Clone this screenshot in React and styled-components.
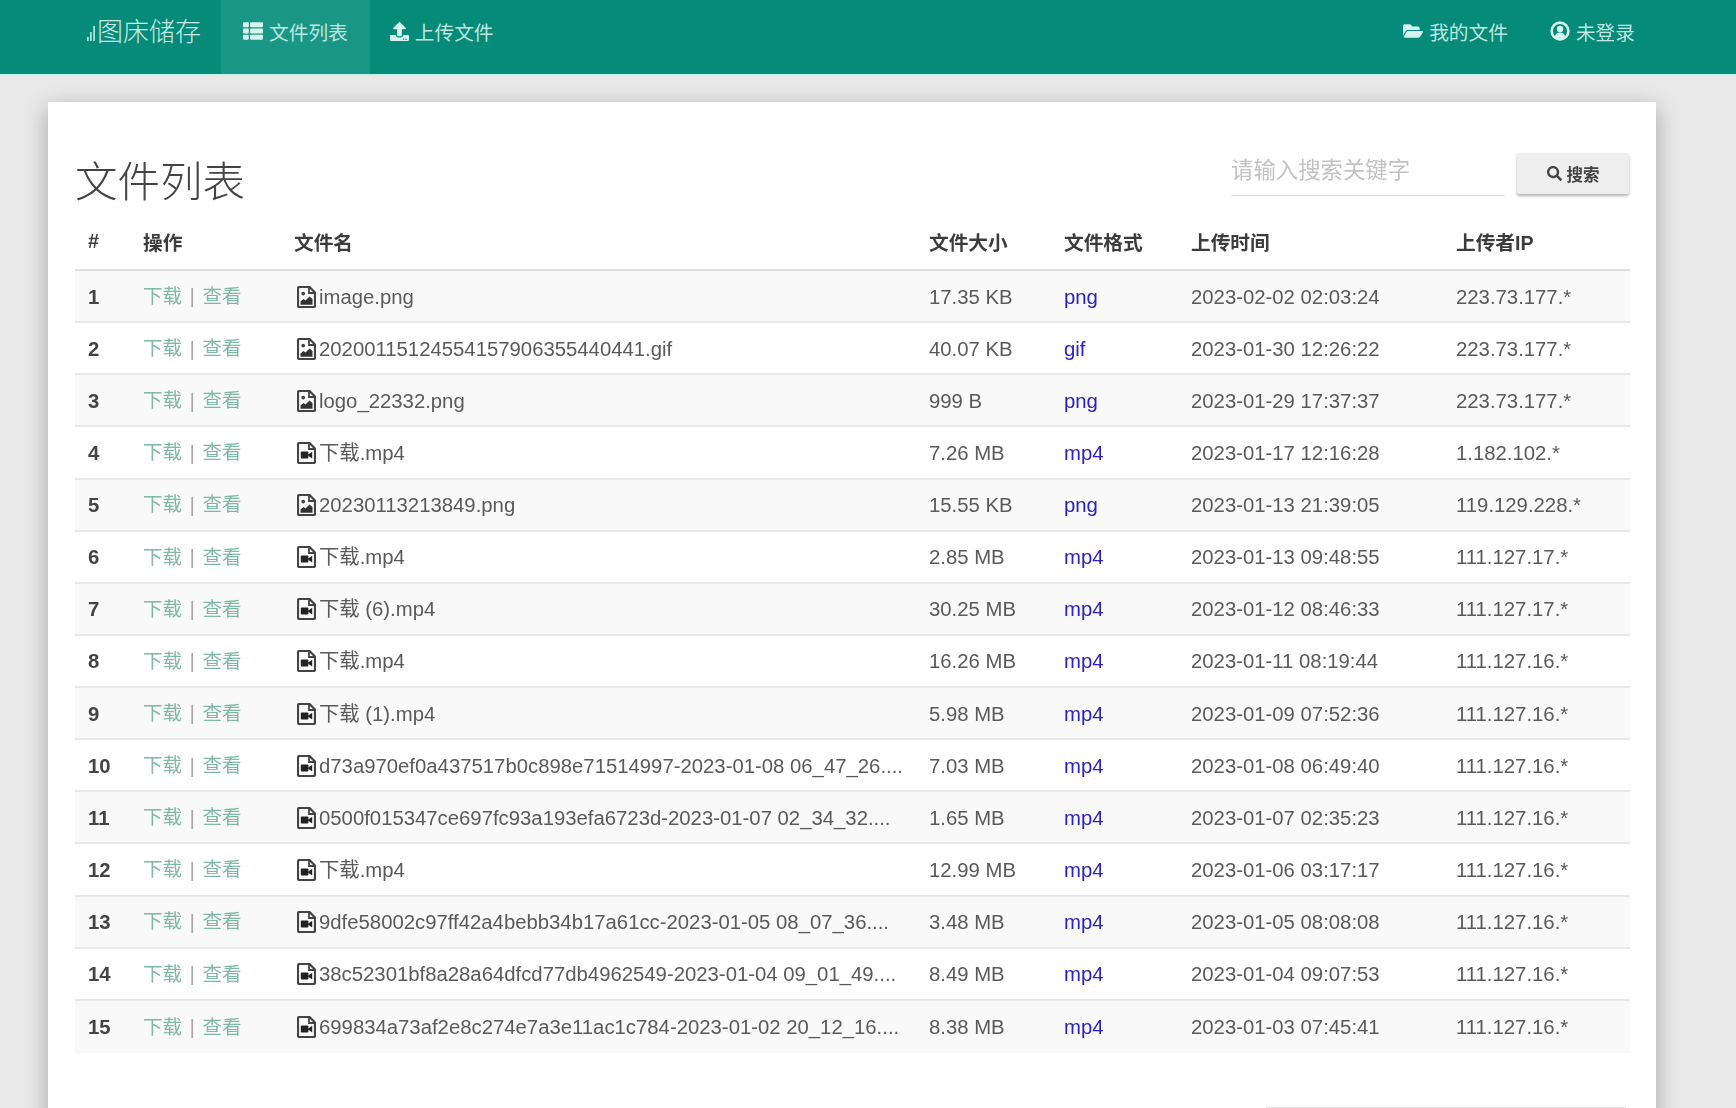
import React from "react";
import styled, { createGlobalStyle } from "styled-components";
import { FaThList, FaUpload, FaFolderOpen, FaSearch } from "react-icons/fa";

const FONT = `"Liberation Sans", "Noto Sans CJK SC", Arial, sans-serif`;

const Global = createGlobalStyle`
  html, body { margin: 0; height: 1108px; overflow: hidden; background: #e9e9e9; }
  * { box-sizing: border-box; }
  body { font-family: ${FONT}; color: #555; }
`;

const Page = styled.div`
  display: flex;
  flex-direction: column;
  height: 1108px;
  overflow: hidden;
  filter: blur(0.7px);
`;

const NavBar = styled.nav`
  flex: none;
  display: flex;
  justify-content: space-between;
  height: 76px;
  padding: 0 81px 0 87px;
  background: #068a7a;
  border-bottom: 2px solid #c2f2ea;
`;

const NavGroup = styled.div`
  display: flex;
  align-items: stretch;
`;

const Brand = styled.a`
  display: flex;
  align-items: center;
  gap: 2px;
  padding: 0 20px 16px 0;
  font-size: 26px;
  font-weight: 300;
  color: #c6ebe5;
`;

const BrandMark = styled.svg`
  width: 8px;
  height: 16px;
  margin-top: 8px;
`;

const NavItem = styled.a`
  display: flex;
  align-items: center;
  gap: ${(p) => p.$gap || 6}px;
  padding: 0 ${(p) => p.$padEnd || p.$pad || 21}px 12px ${(p) => p.$pad || 21}px;
  font-size: 19.7px;
  color: #bfe6df;
  background: ${(p) => (p.$active ? "#1a9686" : "transparent")};
  svg { flex: none; color: #d6f3ee; }
`;

const Card = styled.main`
  flex: 1;
  margin: 26px 80px 0 48px;
  padding: 50px 25px 0 27px;
  background: #fff;
  box-shadow: 0 6px 22px rgba(0, 0, 0, 0.3);
`;

const CardHead = styled.header`
  display: flex;
  justify-content: space-between;
  align-items: flex-start;
  height: 65px;
`;

const Title = styled.h1`
  margin: 0;
  padding-top: 3px;
  font-size: 42.5px;
  line-height: 56px;
  font-weight: 300;
  color: #444;
`;

const SearchForm = styled.form`
  display: flex;
  align-items: flex-start;
  gap: 12px;
  margin: 1px 2px 0 0;
`;

const SearchInput = styled.input`
  width: 274px;
  height: 43px;
  padding: 0 0 7px;
  border: 0;
  border-bottom: 1.5px solid #dcdcdc;
  outline: none;
  background: transparent;
  font-family: ${FONT};
  font-size: 22.4px;
  &::placeholder { color: #c2c2c2; opacity: 1; }
`;

const SearchButton = styled.button`
  display: flex;
  align-items: center;
  justify-content: center;
  gap: 5px;
  width: 112px;
  height: 41px;
  border: 0;
  border-radius: 2px;
  background: #eeeeee;
  box-shadow: 0 2px 3px rgba(0, 0, 0, 0.3);
  font-family: ${FONT};
  font-size: 16.5px;
  font-weight: 700;
  color: #444;
`;

const Table = styled.table`
  width: 1555px;
  table-layout: fixed;
  border-collapse: separate;
  border-spacing: 0;
  font-size: 20.32px;
`;

const HeadCell = styled.th`
  height: 54px;
  padding: 0 13px 4px 13px;
  text-align: left;
  font-size: 19.7px;
  font-weight: 700;
  color: #3c3c3c;
  border-bottom: 2px solid #dddddd;
`;

const Row = styled.tr`
  background: ${(p) => (p.$odd ? "#f9f9f9" : "#fff")};
`;

const Cell = styled.td`
  height: 52.13px;
  padding: 1px 13px 0;
  line-height: 24px;
  white-space: nowrap;
  overflow: hidden;
  color: #5a5a5a;
  border-bottom: ${(p) => (p.$last ? "0" : "2px solid #e9e9e9")};
`;

const IndexCell = styled(Cell)`
  font-weight: 700;
  color: #444;
`;

const Actions = styled.span`
  display: inline-flex;
  align-items: center;
  gap: 7.5px;
  margin-bottom: 2px;
  vertical-align: middle;
  font-size: 19.5px;
`;

const ActionLink = styled.a`
  color: #7db9a6;
`;

const Divider = styled.span`
  color: #a8a8a8;
  font-size: 21px;
  line-height: 1;
`;

const FileName = styled.span`
  display: flex;
  align-items: center;
  gap: 3px;
  margin-left: 3px;
`;

const FileLabel = styled.span`
  line-height: 24px;
  height: 24px;
`;

const FileGlyph = styled.svg`
  flex: none;
  width: 19px;
  height: 22px;
`;

const UserGlyph = styled.svg`
  width: 20px;
  height: 20px;
`;

const FormatLink = styled.a`
  color: #2a22c9;
`;

const Pager = styled.div`
  width: 360px;
  height: 40px;
  margin: 54px 5px 0 auto;
  border-top: 2px solid #e4e4e4;
`;

const ImageIcon = () => (
  <FileGlyph viewBox="0 0 19 22" aria-hidden="true">
    <path d="M2.5 1h10L18 6.5V19.5a1.5 1.5 0 0 1-1.5 1.5h-14A1.5 1.5 0 0 1 1 19.5v-17A1.5 1.5 0 0 1 2.5 1z" fill="none" stroke="#444" strokeWidth="2.2" />
    <path d="M12 1v6h6" fill="none" stroke="#444" strokeWidth="1.8" />
    <circle cx="6.2" cy="7.6" r="1.9" fill="#444" />
    <path d="M3.5 18.8v-3.3l3-2.5 2 1.6 4-4.1 3 2.6v5.7z" fill="#333" />
  </FileGlyph>
);

const VideoIcon = () => (
  <FileGlyph viewBox="0 0 19 22" aria-hidden="true">
    <path d="M2.5 1h10L18 6.5V19.5a1.5 1.5 0 0 1-1.5 1.5h-14A1.5 1.5 0 0 1 1 19.5v-17A1.5 1.5 0 0 1 2.5 1z" fill="none" stroke="#444" strokeWidth="2.2" />
    <path d="M12 1v6h6" fill="none" stroke="#444" strokeWidth="1.8" />
    <rect x="3.8" y="9.6" width="7.6" height="7" rx="1" fill="#222" />
    <path d="M11 12.8 15.2 9.8v6.6L11 13.4z" fill="#222" />
  </FileGlyph>
);

const UserIcon = () => (
  <UserGlyph viewBox="0 0 20 20" aria-hidden="true">
    <circle cx="10" cy="10" r="8.4" fill="none" stroke="currentColor" strokeWidth="2.6" />
    <circle cx="10" cy="8" r="3.2" fill="currentColor" />
    <path d="M4.8 15.4c1-2.8 3-3.8 5.2-3.8s4.200 1 5.200 3.800c-1.400 1.200-3.200 2-5.200 2s-3.800-.8-5.200-2z" fill="currentColor" />
  </UserGlyph>
);

const rows = [
  ["image.png", "17.35 KB", "png", "2023-02-02 02:03:24", "223.73.177.*"],
  ["20200115124554157906355440441.gif", "40.07 KB", "gif", "2023-01-30 12:26:22", "223.73.177.*"],
  ["logo_22332.png", "999 B", "png", "2023-01-29 17:37:37", "223.73.177.*"],
  ["下载.mp4", "7.26 MB", "mp4", "2023-01-17 12:16:28", "1.182.102.*"],
  ["20230113213849.png", "15.55 KB", "png", "2023-01-13 21:39:05", "119.129.228.*"],
  ["下载.mp4", "2.85 MB", "mp4", "2023-01-13 09:48:55", "111.127.17.*"],
  ["下载 (6).mp4", "30.25 MB", "mp4", "2023-01-12 08:46:33", "111.127.17.*"],
  ["下载.mp4", "16.26 MB", "mp4", "2023-01-11 08:19:44", "111.127.16.*"],
  ["下载 (1).mp4", "5.98 MB", "mp4", "2023-01-09 07:52:36", "111.127.16.*"],
  ["d73a970ef0a437517b0c898e71514997-2023-01-08 06_47_26....", "7.03 MB", "mp4", "2023-01-08 06:49:40", "111.127.16.*"],
  ["0500f015347ce697fc93a193efa6723d-2023-01-07 02_34_32....", "1.65 MB", "mp4", "2023-01-07 02:35:23", "111.127.16.*"],
  ["下载.mp4", "12.99 MB", "mp4", "2023-01-06 03:17:17", "111.127.16.*"],
  ["9dfe58002c97ff42a4bebb34b17a61cc-2023-01-05 08_07_36....", "3.48 MB", "mp4", "2023-01-05 08:08:08", "111.127.16.*"],
  ["38c52301bf8a28a64dfcd77db4962549-2023-01-04 09_01_49....", "8.49 MB", "mp4", "2023-01-04 09:07:53", "111.127.16.*"],
  ["699834a73af2e8c274e7a3e11ac1c784-2023-01-02 20_12_16....", "8.38 MB", "mp4", "2023-01-03 07:45:41", "111.127.16.*"],
];

const columns = [
  ["#", 55],
  ["操作", 151],
  ["文件名", 635],
  ["文件大小", 135],
  ["文件格式", 127],
  ["上传时间", 265],
  ["上传者IP", 187],
];

export default function App() {
  return (
    <Page>
      <Global />
      <NavBar>
        <NavGroup>
          <Brand>
            <BrandMark viewBox="0 0 8 16" aria-hidden="true">
              <rect x="0" y="12" width="1.8" height="4" fill="#a8e3d9" />
              <rect x="3" y="7" width="1.8" height="9" fill="#a8e3d9" />
              <rect x="6.200" y="1" width="1.8" height="15" fill="#a8e3d9" />
            </BrandMark>
            图床储存
          </Brand>
          <NavItem $active $pad={22}>
            <FaThList size={20} />
            文件列表
          </NavItem>
          <NavItem $pad={20}>
            <FaUpload size={19} />
            上传文件
          </NavItem>
        </NavGroup>
        <NavGroup>
          <NavItem $pad={20} $padEnd={22} $gap={6}>
            <FaFolderOpen size={20} />
            我的文件
          </NavItem>
          <NavItem $pad={20}>
            <UserIcon />
            未登录
          </NavItem>
        </NavGroup>
      </NavBar>
      <Card>
        <CardHead>
          <Title>文件列表</Title>
          <SearchForm>
            <SearchInput placeholder="请输入搜索关键字" />
            <SearchButton type="button">
              <FaSearch size={15} />
              搜索
            </SearchButton>
          </SearchForm>
        </CardHead>
        <Table>
          <colgroup>
            {columns.map(([label, width]) => (
              <col key={label} width={width} />
            ))}
          </colgroup>
          <thead>
            <tr>
              {columns.map(([label]) => (
                <HeadCell key={label}>{label}</HeadCell>
              ))}
            </tr>
          </thead>
          <tbody>
            {rows.map(([name, size, format, time, ip], i) => {
              const last = i === rows.length - 1;
              return (
                <Row key={i} $odd={i % 2 === 0}>
                  <IndexCell $last={last}>{i + 1}</IndexCell>
                  <Cell $last={last}>
                    <Actions>
                      <ActionLink>下载</ActionLink>
                      <Divider>|</Divider>
                      <ActionLink>查看</ActionLink>
                    </Actions>
                  </Cell>
                  <Cell $last={last}>
                    <FileName>
                      {format === "mp4" ? <VideoIcon /> : <ImageIcon />}
                      <FileLabel>{name}</FileLabel>
                    </FileName>
                  </Cell>
                  <Cell $last={last}>{size}</Cell>
                  <Cell $last={last}>
                    <FormatLink>{format}</FormatLink>
                  </Cell>
                  <Cell $last={last}>{time}</Cell>
                  <Cell $last={last}>{ip}</Cell>
                </Row>
              );
            })}
          </tbody>
        </Table>
        <Pager />
      </Card>
    </Page>
  );
}
